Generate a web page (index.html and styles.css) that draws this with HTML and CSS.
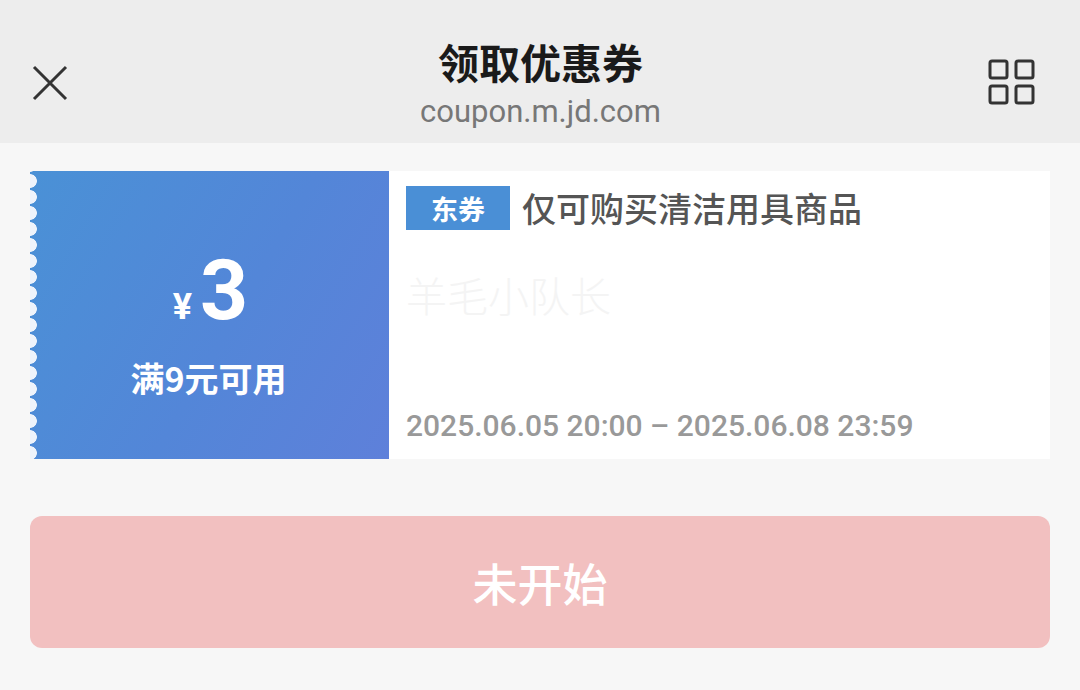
FILE: index.html
```html
<!DOCTYPE html>
<html lang="zh-CN">
<head>
  <meta charset="UTF-8" />
  <meta name="viewport" content="width=device-width, initial-scale=1.0" />
  <title>领取优惠券</title>
  <link rel="stylesheet" href="styles.css">
</head>
<body>

  <div class="topbar">
    <div class="close">
      <svg width="38" height="38" viewBox="0 0 38 38">
        <path d="M3 3 L35 35 M35 3 L3 35" stroke="#333" stroke-width="3" fill="none" />
      </svg>
    </div>
    <div class="titles">
      <div class="title">领取优惠券</div>
      <div class="subtitle">coupon.m.jd.com</div>
    </div>
    <div class="menu">
      <svg width="48" height="46" viewBox="0 0 48 46">
        <rect x="2" y="2" width="17" height="17" rx="2" stroke="#333" stroke-width="3" fill="none" />
        <rect x="28" y="2" width="17" height="17" rx="2" stroke="#333" stroke-width="3" fill="none" />
        <rect x="2" y="27" width="17" height="17" rx="2" stroke="#333" stroke-width="3" fill="none" />
        <rect x="28" y="27" width="17" height="17" rx="2" stroke="#333" stroke-width="3" fill="none" />
      </svg>
    </div>
  </div>

  <div class="content">
    <div class="coupon">
      <div class="coupon-left">
        <div class="amount"><span class="yen">¥</span><span class="num">3</span></div>
        <div class="limit">满9元可用</div>
      </div>
      <div class="coupon-right">
        <div class="head">
          <span class="tag">东券</span>
          <span class="desc">仅可购买清洁用具商品</span>
        </div>
        <div class="watermark">羊毛小队长</div>
        <div class="date">2025.06.05 20:00 – 2025.06.08 23:59</div>
      </div>
    </div>

    <button class="btn">未开始</button>
  </div>

</body>
</html>
```

FILE: styles.css
```css
body {
  margin: 0;
  background: #f7f7f7;
  font-family: Roboto, "Noto Sans CJK SC", sans-serif;
  width: 1080px;
  height: 690px;
  overflow: hidden;
}
.topbar {
  height: 143px;
  background: #ededed;
  display: flex;
  align-items: center;
  justify-content: space-between;
  padding: 0 44px 0 31px;
}
.close {
  padding-top: 22px;
}
.close svg, .menu svg {
  display: block;
}
.menu {
  padding-top: 20px;
}
.titles {
  text-align: center;
  padding-top: 24px;
  margin-left: 24px;
}
.title {
  font-family: "Noto Sans CJK SC", sans-serif;
  font-size: 41px;
  font-weight: 700;
  color: #1a1a1a;
  line-height: 50px;
}
.subtitle {
  font-size: 31px;
  color: #777;
  line-height: 40px;
  margin-top: 6px;
}
.content {
  padding: 28px 30px 0;
}
.coupon {
  display: flex;
  height: 288px;
}
.coupon-left {
  position: relative;
  width: 359px;
  background: linear-gradient(120deg, #4a91d6 0%, #5386d8 55%, #5e80da 100%);
  color: #fff;
  display: flex;
  flex-direction: column;
  align-items: center;
  justify-content: center;
  padding-top: 20px;
  box-sizing: border-box;
}
.coupon-left::before {
  content: "";
  position: absolute;
  left: 0;
  top: 0;
  bottom: 0;
  width: 8px;
  background: radial-gradient(circle at 0 50%, #eef3fb 6.5px, transparent 7.2px) 0 2px / 8px 16px repeat-y;
}
.amount {
  display: flex;
  align-items: baseline;
  margin-left: 2px;
}
.yen {
  font-size: 36px;
  font-weight: 700;
  margin-right: 8px;
}
.num {
  font-size: 84px;
  font-weight: 700;
  line-height: 84px;
}
.limit {
  font-family: "Noto Sans CJK SC", sans-serif;
  font-size: 34px;
  font-weight: 700;
  margin-top: 20px;
  margin-right: 2px;
}
.coupon-right {
  flex: 1;
  background: #fff;
  padding: 12px 17px 0;
  display: flex;
  flex-direction: column;
}
.head {
  display: flex;
  align-items: center;
}
.tag {
  background: #4a8fd6;
  color: #fff;
  font-family: "Noto Sans CJK SC", sans-serif;
  font-size: 27px;
  font-weight: 700;
  width: 104px;
  height: 44px;
  line-height: 46px;
  text-align: center;
}
.desc {
  font-family: "Noto Sans CJK SC", sans-serif;
  font-size: 34px;
  font-weight: 500;
  color: #555;
  margin-left: 12px;
}
.watermark {
  font-family: "Noto Sans CJK SC", sans-serif;
  font-size: 41px;
  font-weight: 300;
  color: #f4f4f4;
  margin-top: 39px;
  line-height: 46px;
}
.date {
  font-size: 30px;
  font-weight: 500;
  color: #999;
  margin-top: auto;
  margin-bottom: 16px;
}
.btn {
  display: block;
  width: 100%;
  height: 132px;
  margin-top: 57px;
  border: none;
  border-radius: 12px;
  background: #f2c0c0;
  color: #fff;
  font-family: "Noto Sans CJK SC", sans-serif;
  font-size: 45px;
  font-weight: 500;
}
```
